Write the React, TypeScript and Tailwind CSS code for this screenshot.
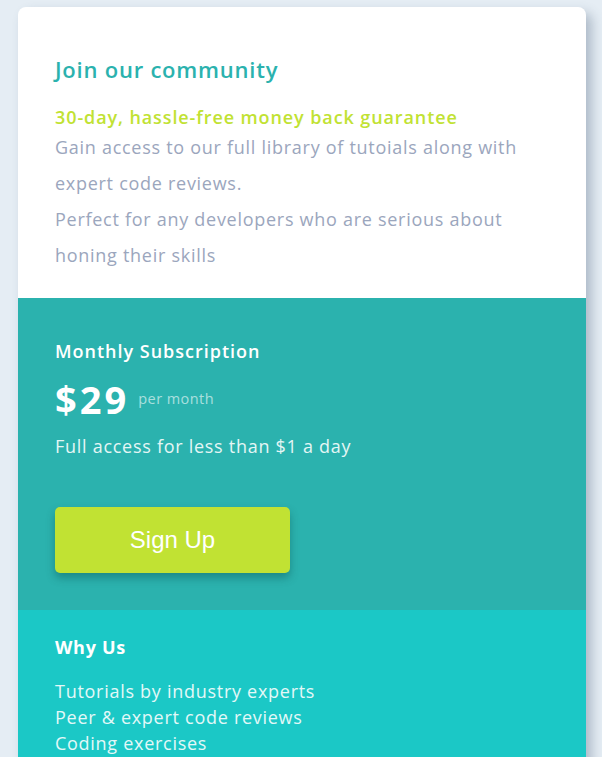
import React from 'react';

const features = ['Tutorials by industry experts', 'Peer & expert code reviews', 'Coding exercises'];

export default function App() {
  return (
    <div className="min-h-screen bg-[#e5edf4] px-[18px] pt-[7px] pb-10 font-['Open_Sans',sans-serif]">
      <div className="w-[568px] overflow-hidden rounded-lg bg-white shadow-[6px_6px_12px_rgba(60,80,110,0.32)]">
        <section className="px-[37px] pt-[48px] pb-[25px]">
          <h1 className="text-[22px] leading-[28px] font-semibold tracking-[0.035em] text-[#2bb2ae]">Join our community</h1>
          <h2 className="mt-[22px] text-[18px] leading-[24px] font-semibold tracking-[0.05em] text-[#c1e233]">
            30-day, hassle-free money back guarantee
          </h2>
          <p className="text-[18px] leading-[36px] tracking-[0.04em] text-[#9ba6bd]">
            Gain access to our full library of tutoials along with expert code reviews.
            <br />
            Perfect for any developers who are serious about honing their skills
          </p>
        </section>

        <section className="bg-[#2bb2ae] px-[37px] pt-[41px] pb-[37px]">
          <h3 className="text-[18px] leading-[24px] font-semibold tracking-[0.055em] text-white">Monthly Subscription</h3>
          <div className="mt-[12px] flex items-center gap-[9px]">
            <span className="text-[38px] leading-[48px] font-bold tracking-[0.08em] text-white">$29</span>
            <span className="text-[14.5px] tracking-[0.03em] text-white/60">per month</span>
          </div>
          <p className="mt-[11px] text-[18px] leading-[24px] tracking-[0.04em] text-[#e4f6f5]">
            Full access for less than $1 a day
          </p>
          <button className="mt-[49px] h-[66px] w-[235px] rounded-[5px] bg-[#c1e233] font-['Liberation_Sans',Arial,sans-serif] text-[24px] text-white shadow-[0_5px_8px_rgba(0,60,60,0.35)]">
            Sign Up
          </button>
        </section>

        <section className="bg-[#1bc8c6] px-[37px] pt-[25px] pb-[60px]">
          <h3 className="text-[18px] leading-[24px] font-bold tracking-[0.04em] text-white">Why Us</h3>
          <ul className="mt-[19px] text-[18px] leading-[26px] tracking-[0.04em] text-[#e3f8f8]">
            {features.map((f) => (
              <li key={f}>{f}</li>
            ))}
          </ul>
        </section>
      </div>
    </div>
  );
}
